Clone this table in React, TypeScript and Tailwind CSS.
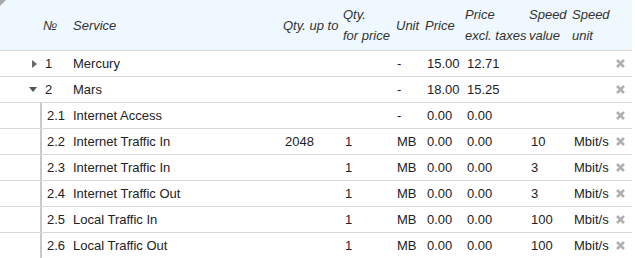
import React from "react"

type Row = {
  no: string
  service: string
  qtyUpTo?: string
  qtyFor?: string
  unit: string
  price: string
  priceExcl: string
  speed?: string
  speedUnit?: string
  level: 0 | 1
  expander?: "open" | "closed"
}

const rows: Row[] = [
  { no: "1", service: "Mercury", unit: "-", price: "15.00", priceExcl: "12.71", level: 0, expander: "closed" },
  { no: "2", service: "Mars", unit: "-", price: "18.00", priceExcl: "15.25", level: 0, expander: "open" },
  { no: "2.1", service: "Internet Access", unit: "-", price: "0.00", priceExcl: "0.00", level: 1 },
  { no: "2.2", service: "Internet Traffic In", qtyUpTo: "2048", qtyFor: "1", unit: "MB", price: "0.00", priceExcl: "0.00", speed: "10", speedUnit: "Mbit/s", level: 1 },
  { no: "2.3", service: "Internet Traffic In", qtyFor: "1", unit: "MB", price: "0.00", priceExcl: "0.00", speed: "3", speedUnit: "Mbit/s", level: 1 },
  { no: "2.4", service: "Internet Traffic Out", qtyFor: "1", unit: "MB", price: "0.00", priceExcl: "0.00", speed: "3", speedUnit: "Mbit/s", level: 1 },
  { no: "2.5", service: "Local Traffic In", qtyFor: "1", unit: "MB", price: "0.00", priceExcl: "0.00", speed: "100", speedUnit: "Mbit/s", level: 1 },
  { no: "2.6", service: "Local Traffic Out", qtyFor: "1", unit: "MB", price: "0.00", priceExcl: "0.00", speed: "100", speedUnit: "Mbit/s", level: 1 },
]

function Arrow({ open }: { open: boolean }) {
  return open ? (
    <svg width="8" height="5" viewBox="0 0 8 5" className="text-[#555]">
      <path d="M0 0h8L4 5z" fill="currentColor" />
    </svg>
  ) : (
    <svg width="5" height="8" viewBox="0 0 5 8" className="text-[#666]">
      <path d="M0 0v8l5-4z" fill="currentColor" />
    </svg>
  )
}

function RemoveIcon() {
  return (
    <svg width="9" height="9" viewBox="0 0 9 9">
      <path d="M1 1l7 7M8 1l-7 7" stroke="#b0b0b0" strokeWidth="2.6" strokeLinecap="butt" />
    </svg>
  )
}

export default function App() {
  return (
    <div
      className="relative w-[632px] bg-white text-[13px] text-[#222]"
      style={{ fontFamily: '"Liberation Sans", Arial, Helvetica, sans-serif' }}
    >
      <svg width="6" height="6" viewBox="0 0 6 6" className="absolute left-0 top-0">
        <path d="M0 0h6L0 6z" fill="#a9a9a9" />
      </svg>

      {/* header */}
      <div className="flex h-[51px] items-center whitespace-nowrap border-b border-[#d8d8d8] bg-[#eef8fe] italic leading-[21px] text-[#333]">
        <div className="w-[42px]" />
        <div className="w-[28px] pl-[1px]">№</div>
        <div className="w-[210px] pl-[3px]">Service</div>
        <div className="w-[60px] pl-[3px]">Qty. up to</div>
        <div className="w-[53px] pl-[3px]">
          Qty.
          <br />
          for price
        </div>
        <div className="w-[29px] pl-[3px]">Unit</div>
        <div className="w-[40px] pl-[3px]">Price</div>
        <div className="w-[64px] pl-[3px]">
          Price
          <br />
          excl. taxes
        </div>
        <div className="w-[43px] pl-[3px]">
          Speed
          <br />
          value
        </div>
        <div className="w-[43px] pl-[3px]">
          Speed
          <br />
          unit
        </div>
      </div>

      {rows.map((r) => (
        <div key={r.no} className="flex h-[26px] items-center whitespace-nowrap border-b border-[#d8d8d8]">
          {r.level === 0 ? (
            <div className="flex w-[42px] items-center justify-end pr-[5px]">
              <Arrow open={r.expander === "open"} />
            </div>
          ) : (
            <div className="h-full w-[42px] border-r-2 border-[#c9c9c9]" />
          )}
          <div className={r.level === 0 ? "w-[28px] pl-[3px]" : "w-[28px] pl-[5px]"}>{r.no}</div>
          <div className="w-[210px] pl-[3px]">{r.service}</div>
          <div className="w-[60px] pl-[5px]">{r.qtyUpTo}</div>
          <div className="w-[53px] pl-[5px]">{r.qtyFor}</div>
          <div className="w-[29px] pl-[4px]">{r.unit}</div>
          <div className="w-[40px] pl-[5px]">{r.price}</div>
          <div className="w-[64px] pl-[5px]">{r.priceExcl}</div>
          <div className="w-[43px] pl-[5px]">{r.speed}</div>
          <div className="w-[43px] pl-[5px]">{r.speedUnit}</div>
          <div className="flex flex-1 justify-end pr-[7px]">
            <RemoveIcon />
          </div>
        </div>
      ))}
    </div>
  )
}
